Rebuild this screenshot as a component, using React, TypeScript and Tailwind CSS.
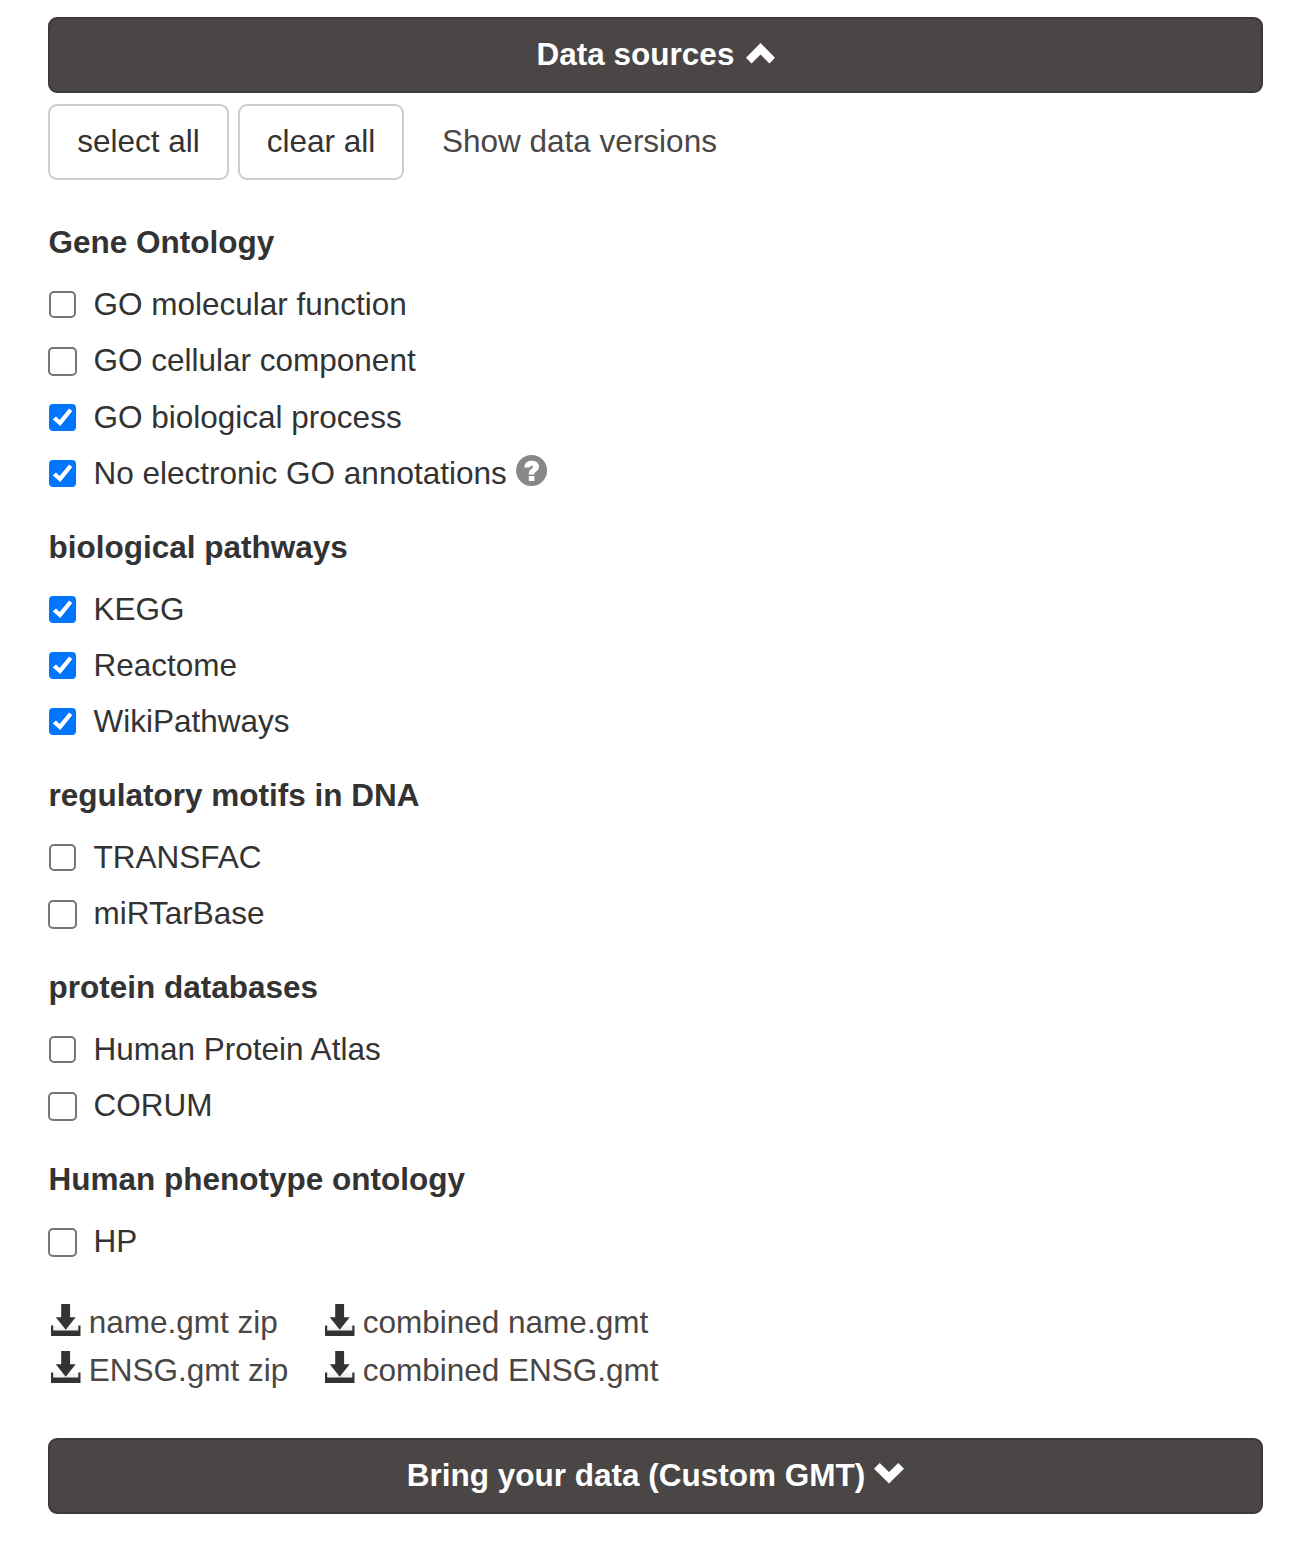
import React, { useState } from "react";

type Source = { name: string; checked?: boolean; large?: boolean; help?: boolean };
type Group = { title: string; items: Source[] };

const groups: Group[] = [
  {
    title: "Gene Ontology",
    items: [
      { name: "GO molecular function" },
      { name: "GO cellular component", large: true },
      { name: "GO biological process", checked: true },
      { name: "No electronic GO annotations", checked: true, help: true },
    ],
  },
  {
    title: "biological pathways",
    items: [
      { name: "KEGG", checked: true },
      { name: "Reactome", checked: true },
      { name: "WikiPathways", checked: true },
    ],
  },
  {
    title: "regulatory motifs in DNA",
    items: [{ name: "TRANSFAC" }, { name: "miRTarBase", large: true }],
  },
  {
    title: "protein databases",
    items: [{ name: "Human Protein Atlas" }, { name: "CORUM", large: true }],
  },
  {
    title: "Human phenotype ontology",
    items: [{ name: "HP", large: true }],
  },
];

function CheckBox({ checked, large }: { checked: boolean; large?: boolean }) {
  if (checked) {
    return (
      <svg className="mt-[9px] ml-px mr-[17.5px] size-[27px] shrink-0" viewBox="0 0 27 27">
        <rect width="27" height="27" rx="4" fill="#0075ff" />
        <path d="M3.9 15.6L6.9 12.5L10.7 16L20 4.4L23.4 7L11.3 22z" fill="#fff" />
      </svg>
    );
  }
  return large ? (
    <span className="mt-[9px] mr-[16.5px] size-[29px] shrink-0 rounded-[5px] border-2 border-[#767676] bg-white" />
  ) : (
    <span className="mt-[9px] ml-px mr-[17.5px] size-[27px] shrink-0 rounded-[5px] border-2 border-[#767676] bg-white" />
  );
}

function HelpIcon() {
  return (
    <svg className="mt-[4px] ml-[9px] size-[32px] shrink-0" viewBox="0 0 32 32">
      <circle cx="15.6" cy="15.5" r="15.5" fill="#888" />
      <path
        d="M8.3 12.6C8.5 8.2 11.2 5.7 15.7 5.7c4.5 0 7.3 2.2 7.3 5.9 0 2.7-1.4 4-3.1 5.2-1.2.8-1.5 1.300-1.500 2.600h-5.600c0-2.900.7-4.200 2.500-5.400 1.200-.9 1.600-1.300 1.600-2 0-.8-.5-1.300-1.400-1.300-1.100 0-1.700.7-1.700 1.900zM12.800 20.900h5.600v5.200h-5.600z"
        fill="#fff"
      />
    </svg>
  );
}

function DownloadIcon() {
  return (
    <svg className="mr-[8px] h-[32px] w-[30px] shrink-0" viewBox="0 0 30 32">
      <path d="M2 22h26v5H2z" fill="#f4f4f4" />
      <path d="M0 21.5h2.2v5h25.1v-5h2.2V32H0z" fill="#333" />
      <path d="M10.2 0h8.9v13.2h5.6L14.7 25.8 4.8 13.2h5.4z" fill="#333" />
    </svg>
  );
}

function DownloadLink({ label, second }: { label: string; second?: boolean }) {
  return (
    <a href="#" className="flex h-[48px] text-[#4a4645]">
      <span className={second ? "-mt-px" : ""}>
        <DownloadIcon />
      </span>
      <span className="-ml-[0.25px] leading-[37px] whitespace-nowrap">{label}</span>
    </a>
  );
}

function Chevron({ down }: { down?: boolean }) {
  return (
    <svg
      className={down ? "mt-[22.5px] ml-[9px] h-[21px] w-[30px]" : "mt-[23.5px] ml-[12px] h-[21px] w-[29px]"}
      viewBox="0 0 30 21"
      preserveAspectRatio="none"
    >
      <path
        d={down ? "M5.7 0L15 9L24.3 0L30 5.7L15 20.5L0 5.7z" : "M15 0L30 14.8L24.3 20.5L15 11.5L5.7 20.5L0 14.8z"}
        fill="#fff"
      />
    </svg>
  );
}

const barClass =
  "flex h-[76px] w-full items-start justify-center rounded-[9px] border-2 border-[#3d3938] bg-[#4a4645] font-bold leading-[70px] whitespace-nowrap text-white";
const buttonClass =
  "flex h-[76px] shrink-0 items-start justify-center rounded-[9px] border-2 border-[#ccc] bg-white leading-[70px] text-[#333]";

export default function App() {
  const [selected, setSelected] = useState<string[]>(
    groups.flatMap((g) => g.items.filter((i) => i.checked).map((i) => i.name)),
  );
  const toggle = (name: string) =>
    setSelected((s) => (s.includes(name) ? s.filter((n) => n !== name) : [...s, name]));

  return (
    <main className="h-[1547px] w-[1300px] bg-white pt-[17px] pl-[48px] font-['Liberation_Sans',Arial,sans-serif] text-[31.5px] leading-[45px] text-[#333]">
      <div className="flex w-[1215px] flex-col">
        <button className={barClass}>
          <span className="ml-px">Data sources</span>
          <Chevron />
        </button>
        <div className="mt-[11px] flex">
          <button className={`${buttonClass} w-[181px]`} onClick={() => setSelected(groups.flatMap((g) => g.items.map((i) => i.name)))}>
            select all
          </button>
          <button className={`${buttonClass} ml-[9px] w-[166px]`} onClick={() => setSelected([])}>
            clear all
          </button>
          <a href="#" className="ml-[38px] leading-[75px] text-[#4a4645]">
            Show data versions
          </a>
        </div>

        <div className="mt-[40px] flex flex-col gap-[28.75px]">
          {groups.map((group) => (
            <section key={group.title}>
              <h4 className="mb-[17px] ml-[0.5px] h-[45px] font-bold">{group.title}</h4>
              <div className="flex flex-col gap-[11.25px]">
                {group.items.map((item) => (
                  <label key={item.name} className="flex h-[45px] items-start whitespace-nowrap">
                    <input
                      type="checkbox"
                      className="sr-only"
                      checked={selected.includes(item.name)}
                      onChange={() => toggle(item.name)}
                    />
                    <CheckBox checked={selected.includes(item.name)} large={item.large} />
                    {item.name}
                    {item.help && <HelpIcon />}
                  </label>
                ))}
              </div>
            </section>
          ))}
        </div>

        <div className="mt-[40.25px] ml-[3px] grid grid-cols-[274px_400px]">
          <DownloadLink label="name.gmt zip" />
          <DownloadLink label="combined name.gmt" />
          <DownloadLink label="ENSG.gmt zip" second />
          <DownloadLink label="combined ENSG.gmt" second />
        </div>

        <button className={`${barClass} mt-[38px]`}>
          Bring your data (Custom GMT)
          <Chevron down />
        </button>
      </div>
    </main>
  );
}
